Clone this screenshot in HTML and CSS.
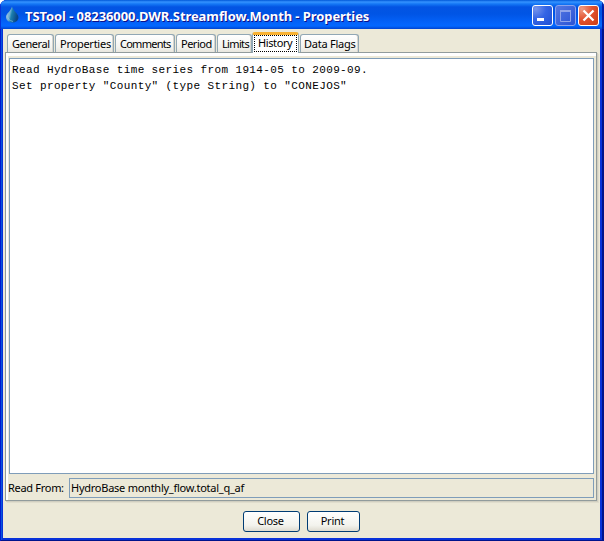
FILE: index.html
```html
<!DOCTYPE html>
<html lang="en">
<head>
<meta charset="utf-8">
<title>TSTool - Properties</title>
<link rel="stylesheet" href="styles.css">
</head>
<body>
<div class="window">
  <header class="titlebar">
    <svg class="app-icon" width="16" height="18" viewBox="0 0 16 18">
      <defs><linearGradient id="drop" x1="0" x2="1" y2="0.3"><stop offset="0" stop-color="#9dbfe6"/><stop offset=".4" stop-color="#6fb0d4"/><stop offset=".55" stop-color="#1b7fae"/><stop offset="1" stop-color="#0a4486"/></linearGradient></defs>
      <path d="M7 0.500C8 5 13.500 7.500 13.500 11.500C13.500 14.500 10.500 16.500 7.500 16.500C4 16.500 1 14 1 11C1 7.500 6 5 7 0.500Z" fill="url(#drop)"/>
      <path d="M2.500 9Q2 14 8 15.500" fill="none" stroke="#9fc3e4" stroke-opacity=".6"/>
    </svg>
    <h1 class="title">TSTool - 08236000.DWR.Streamflow.Month - Properties</h1>
    <div class="controls">
      <span class="control"><svg width="19" height="19"><rect x="4" y="12" width="7" height="3" fill="#fff"/></svg></span>
      <span class="control disabled"><svg width="19" height="19"><path d="M4 5.500H15M4.500 5V15.500H14.500V5" fill="none" stroke="#8fa4ea"/><path d="M4 5H15" stroke="#8fa4ea" stroke-width="2"/></svg></span>
      <span class="control close"><svg width="19" height="19"><path d="M4.500 4.500L14.500 14.500M14.500 4.500L4.500 14.500" stroke="#fff" stroke-width="2.300"/></svg></span>
    </div>
  </header>
  <main class="client">
    <nav class="tabs">
      <div class="tab general"><span>General</span></div>
      <div class="tab properties"><span>Properties</span></div>
      <div class="tab comments"><span>Comments</span></div>
      <div class="tab period"><span>Period</span></div>
      <div class="tab limits"><span>Limits</span></div>
      <div class="tab history active"><span>History</span></div>
      <div class="tab flags"><span>Data Flags</span></div>
    </nav>
    <section class="panel">
      <div class="panel-body">
        <div class="log"><div>Read HydroBase time series from 1914-05 to 2009-09.</div><div>Set property "County" (type String) to "CONEJOS"</div></div>
        <div class="source"><span class="label">Read From:</span><div class="field"><span>HydroBase monthly_flow.total_q_af</span></div></div>
      </div>
    </section>
    <footer class="buttons"><div class="button btn-close">Close</div><div class="button btn-print">Print</div></footer>
  </main>
</div>
</body>
</html>
```
FILE: styles.css
```css
* { box-sizing: border-box; }
body { margin: 0; background: #fff; font: 11px/14px "Noto Sans", sans-serif; letter-spacing: -.25px; color: #000; }
.window { width: 604px; height: 541px; padding: 0 4px 3px 3px; display: flex; flex-direction: column; border-radius: 7px 7px 0 0; overflow: hidden; background: #0831d9; box-shadow: inset 1px 0 #0019cf, inset -2px -1px #00138c, inset 2px 0 #0855dd; }
.titlebar { height: 29px; margin: 0 -4px 0 -3px; padding: 0 5px 0 4px; display: flex; align-items: center; background: linear-gradient(#0058d8 0, #3593ff 2px, #1477f5 4px, #0354e3 7px, #0055e5 14px, #0463fa 23px, #0368ff 26px, #0143cf 29px); box-shadow: inset 1px 0 #0831d9, inset -2px 0 #001fa8; }
.app-icon { margin: 1px 4px 0 1px; }
.title { margin: 3px 0 0; font: 700 13px/18px "Noto Sans", sans-serif; letter-spacing: -.08px; color: #fff; text-shadow: 1px 1px #0f1089; white-space: nowrap; }
.controls { margin: 2px 0 0 auto; display: flex; gap: 2px; }
.control { width: 21px; height: 21px; border: 1px solid #fff; border-radius: 3px; background: radial-gradient(circle at 15% 15%, #7694eb, #3465e5 45%, #1f4fd3); }
.control svg { display: block; }
.disabled { border-color: #8aa2ed; background: linear-gradient(135deg, #5578e2, #2953d5); }
.close { background: radial-gradient(circle at 15% 15%, #f09b83, #e25331 45%, #c83b12); }
.client { flex: 1; background: #ece9d8; padding: 3px 3px 0 2px; }
.tabs { height: 20px; display: flex; align-items: flex-end; padding-left: 2px; gap: 1px; }
.tab { flex: none; height: 18px; border: 1px solid #91a7b4; border-bottom: 0; border-radius: 3px 3px 0 0; background: linear-gradient(#fff, #f3f3ef 70%, #e8e7df); box-shadow: inset -1px 0 #d8d5cc; padding: 2px 0 0 4px; white-space: nowrap; }
.general { width: 47px; letter-spacing: -.4px; }
.properties { width: 59px; }
.comments { width: 60px; letter-spacing: -.75px; }
.period { width: 40px; letter-spacing: -.5px; }
.limits { width: 35px; letter-spacing: -.65px; }
.history { width: 47px; margin-left: -1px; letter-spacing: -.4px; }
.flags { width: 59px; padding-left: 3px; }
.active { height: 21px; margin-bottom: -1px; background: #fff; border-top: 3px solid #f9b233; box-shadow: none; padding: 0 1px; position: relative; }
.active span { display: block; height: 17px; padding: 0 0 0 3px; border: 1px dotted #000; line-height: 13px; }
.panel { height: 449px; width: 592px; border: 1px solid #919b9c; box-shadow: 1px 1px #d0cec0, 2px 2px #e0ddcd; background: #fff; padding: 3px 0 0 2px; }
.panel-body { height: 444px; background: #ece9d8; padding: 2px 2px 2px 0; display: flex; flex-direction: column; gap: 4px; }
.log { margin-left: 1px; height: 416px; flex: none; border: 1px solid #7f9db9; background: #fff; padding: 3px 2px; font: 11px/16px "Liberation Mono", monospace; letter-spacing: .38px; white-space: pre; }
.source { display: flex; align-items: center; height: 20px; }
.label { width: 61px; white-space: nowrap; letter-spacing: -.3px; }
.field { flex: 1; height: 20px; border: 1px solid #7f9db9; padding: 2px 1px; }
.buttons { display: flex; gap: 7px; padding: 10px 0 0 238px; }
.button { width: 57px; height: 21px; border: 1px solid #003c74; border-radius: 3px; background: linear-gradient(#fff, #f3f3ed 70%, #dedbd0); text-align: center; line-height: 18px; }
.btn-close { padding-right: 2px; }
.btn-print { width: 53px; padding-right: 2px; }
```
